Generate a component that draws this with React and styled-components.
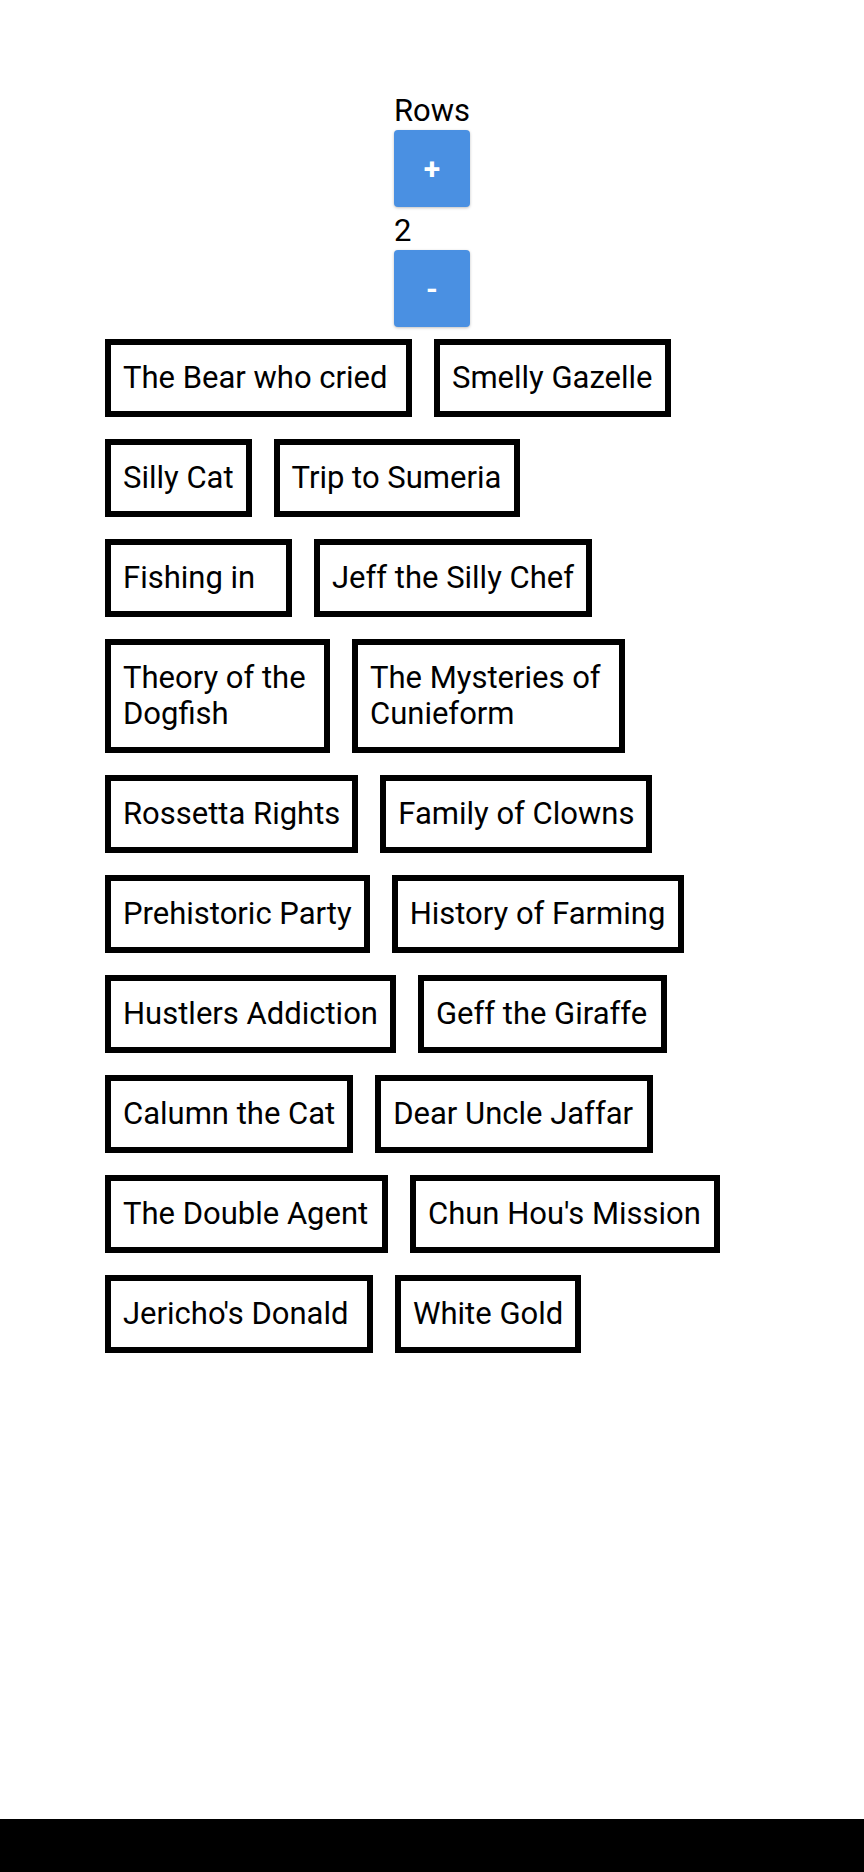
import styled, { createGlobalStyle } from "styled-components";
import { useState } from "react";

const GlobalStyle = createGlobalStyle`
  html, body {
    margin: 0;
    padding: 0;
    background: #ffffff;
  }
  body {
    font-family: Roboto, "Liberation Sans", Arial, sans-serif;
    color: #000000;
  }
`;

const Page = styled.div`
  min-height: 100vh;
  display: flex;
  flex-direction: column;
`;

const Controls = styled.div`
  align-self: center;
  width: 76px;
  padding-top: 93px;
  display: flex;
  flex-direction: column;
`;

const Label = styled.div`
  font-size: 31px;
  line-height: 36px;
`;

const StepButton = styled.button`
  width: 76px;
  height: 77px;
  margin: 1px 0 6px;
  border: none;
  border-radius: 4px;
  background-color: #4a90e2;
  box-shadow: 0 1px 3px rgba(0, 0, 0, 0.25);
  color: #ffffff;
  font-family: Roboto, "Liberation Sans", Arial, sans-serif;
  font-size: 30px;
  font-weight: 700;
  padding: 0;
  cursor: pointer;
`;

const Board = styled.div`
  margin-top: 6px;
  padding-left: 105px;
  display: flex;
  flex-direction: column;
  gap: 22px;
`;

const Row = styled.div`
  display: flex;
  align-items: flex-start;
  gap: 22px;
`;

const Tag = styled.div`
  box-sizing: border-box;
  flex: none;
  min-width: ${(p) => p.$w}px;
  max-width: ${(p) => (p.$wrap ? `${p.$w}px` : "none")};
  white-space: ${(p) => (p.$wrap ? "normal" : "nowrap")};
  border: 6px solid #000000;
  padding: 15px 12px;
  font-size: 31px;
  line-height: 36px;
  background: #ffffff;
`;

const NavBar = styled.div`
  margin-top: auto;
  height: 53px;
  background: #000000;
`;

const books = [
  { title: "The Bear who cried", w: 307 },
  { title: "Smelly Gazelle", w: 235 },
  { title: "Silly Cat", w: 144 },
  { title: "Trip to Sumeria", w: 246 },
  { title: "Fishing in", w: 187 },
  { title: "Jeff the Silly Chef", w: 278 },
  { title: "Theory of the Dogfish", w: 225, wrap: true },
  { title: "The Mysteries of Cunieform", w: 273, wrap: true },
  { title: "Rossetta Rights", w: 253 },
  { title: "Family of Clowns", w: 272 },
  { title: "Prehistoric Party", w: 264 },
  { title: "History of Farming", w: 292 },
  { title: "Hustlers Addiction", w: 290 },
  { title: "Geff the Giraffe", w: 249 },
  { title: "Calumn the Cat", w: 248 },
  { title: "Dear Uncle Jaffar", w: 278 },
  { title: "The Double Agent", w: 283 },
  { title: "Chun Hou's Mission", w: 310 },
  { title: "Jericho's Donald", w: 268 },
  { title: "White Gold", w: 186 },
];

const App = () => {
  const [rows, setRows] = useState(2);

  const perRow = Math.max(1, rows);
  const grouped = [];
  for (let i = 0; i < books.length; i += perRow) {
    grouped.push(books.slice(i, i + perRow));
  }

  return (
    <Page>
      <GlobalStyle />
      <Controls>
        <Label>Rows</Label>
        <StepButton onClick={() => setRows(rows + 1)}>+</StepButton>
        <Label>{rows}</Label>
        <StepButton onClick={() => setRows(Math.max(1, rows - 1))}>-</StepButton>
      </Controls>
      <Board>
        {grouped.map((group, i) => (
          <Row key={i}>
            {group.map((b) => (
              <Tag key={b.title} $w={b.w} $wrap={b.wrap}>
                {b.title}
              </Tag>
            ))}
          </Row>
        ))}
      </Board>
      <NavBar />
    </Page>
  );
};

export default App;
